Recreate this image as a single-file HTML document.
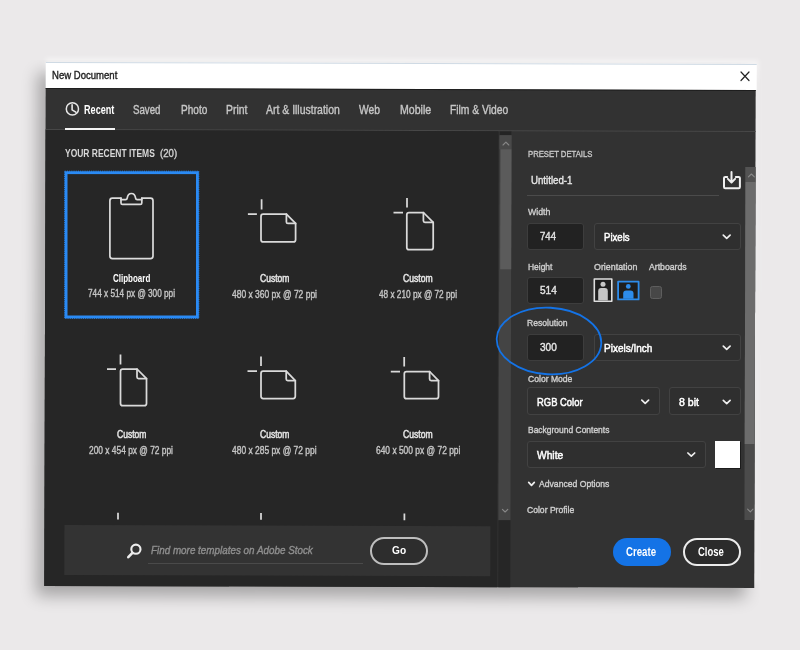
<!DOCTYPE html>
<html lang="en"><head><meta charset="utf-8"><title>New Document</title>
<style>
*{margin:0;padding:0;box-sizing:border-box}
html,body{width:800px;height:650px;overflow:hidden}
body{background:#ebe9ea;font-family:"Liberation Sans",sans-serif;position:relative}
.abs,.t,svg{position:absolute}
.t{white-space:nowrap;line-height:1;transform-origin:0 50%;display:block;-webkit-text-stroke:.38px currentColor}
#rot{left:0;top:0;width:800px;height:650px;transform:rotate(.165deg);transform-origin:400px 325px}
#glow{left:46px;top:64px;width:709px;height:520px;box-shadow:1px -3px 5px 2px rgba(255,255,255,.5)}
#shadow{left:45.5px;top:64px;width:709px;height:522.5px;box-shadow:-9px 10px 16px rgba(0,0,0,.29);clip-path:inset(-3px -6px -60px -60px)}
#titlebar{left:44.85px;top:63.3px;width:711.3px;height:25.6px;background:#fff;border-top:1px solid #cfdae4}
#tbline{left:44.85px;top:88.9px;width:710.35px;height:1.5px;background:#1d1d1d}
#win{left:44.85px;top:88.9px;width:710.35px;height:498.1px;background:#323232}
#tabline{left:44.85px;top:129.6px;width:710.35px;height:1px;background:#474747}
#tabul{left:65.3px;top:127.6px;width:49.6px;height:2.8px;background:#f4f4f4}
#left{left:44.85px;top:130.6px;width:453.65px;height:456.4px;background:#262626}
#lscroll{left:498.5px;top:131px;width:12.5px;height:389px;background:#444}
#lscroll .cap{left:0;top:0;width:12.5px;height:3.6px;background:#242424}
#lscroll .arr{left:0;top:3.6px;width:12.5px;height:14.6px;background:#494949}
#lscroll .thumb{left:1px;top:18.2px;width:11px;height:119.8px;background:#5b5b5b}
#lscrollbelow{left:498.5px;top:520px;width:12.5px;height:67px;background:#262626}
#search{left:64.8px;top:525.7px;width:426.2px;height:50px;background:#333}
#sul{left:148px;top:563px;width:215px;height:1px;background:#4a4a4a}
.pill{border-radius:15px}
#go{left:370px;top:537.2px;width:58px;height:28px;border:2px solid #bebebe;background:#2d2d2d}
#create{left:613px;top:537.5px;width:58px;height:28px;background:#1473e6}
#close{left:682.7px;top:537.5px;width:58px;height:28px;border:2px solid #ececec;background:#2b2b2b}
.inp{background:#222;border:1px solid #3d3d3d;border-radius:3px;width:57px;height:27.4px;left:527px}
.dd{background:#2f2f2f;border:1px solid #424242;border-radius:3px;height:27.4px}
#nameul{left:527px;top:195px;width:192px;height:1px;background:#4b4b4b}
#rscroll{left:744.6px;top:166px;width:10.8px;height:353px;background:#4b4b4b}
#rscroll .arr{left:0;top:0;width:10.8px;height:14.8px;background:#535353}
#rscroll .thumb{left:0;top:14.8px;width:10.8px;height:261.8px;background:#6c6c6c}
#swatch{left:715px;top:440.6px;width:25px;height:27px;background:#fff;box-shadow:1px 1px 0 #1c1c1c}
#chk{left:649.6px;top:285.6px;width:12.6px;height:13.4px;background:#474747;border:1.3px solid #5e5e5e;border-radius:2.5px}
#txt{left:0;top:0;width:800px;height:650px;will-change:transform}

</style></head><body>
<div class="abs" id="rot">
<div class="abs" id="glow"></div>
<div class="abs" id="shadow"></div>
<div class="abs" id="win"></div>
<div class="abs" id="titlebar"></div>
<div class="abs" id="tbline"></div>
<div class="abs" id="tabline"></div>
<div class="abs" id="left"></div>
<div class="abs" id="lscroll"><div class="abs cap"></div><div class="abs arr"></div><div class="abs thumb"></div></div>
<div class="abs" id="lscrollbelow"></div>
<div class="abs" id="search"></div>
<div class="abs" id="rscroll"><div class="abs arr"></div><div class="abs thumb"></div></div>
</div>
<div class="abs" id="tabul"></div>
<div class="abs" id="sul"></div>
<div class="abs pill" id="go"></div>
<div class="abs pill" id="create"></div>
<div class="abs pill" id="close"></div>
<div class="abs" id="nameul"></div>
<div class="abs inp" style="top:222.6px"></div>
<div class="abs inp" style="top:276.6px"></div>
<div class="abs inp" style="top:333.8px"></div>
<div class="abs dd" style="left:594px;top:222.6px;width:147px"></div>
<div class="abs dd" style="left:594px;top:333.8px;width:147px"></div>
<div class="abs dd" style="left:527px;top:387.4px;width:133px"></div>
<div class="abs dd" style="left:669px;top:387.4px;width:72px"></div>
<div class="abs dd" style="left:527px;top:440.5px;width:179px"></div>
<div class="abs" id="swatch"></div>
<div class="abs" id="chk"></div>
<svg id="ov" width="800" height="650" viewBox="0 0 800 650" style="left:0;top:0" fill="none" stroke-linecap="round" stroke-linejoin="round">
<!-- close X -->
<path d="M741 72 L749 80.5 M749 72 L741 80.5" stroke="#222" stroke-width="1.2"/>
<!-- clock icon -->
<circle cx="72.4" cy="108.9" r="6.1" stroke="#e8e8e8" stroke-width="1.5"/>
<path d="M72.1 104.8 V109.8 L75.8 112.2" stroke="#e8e8e8" stroke-width="1.6"/>
<!-- selection box -->
<rect x="66.1" y="172.7" width="131.3" height="144.2" stroke="#2a8af4" stroke-width="2.8" stroke-linejoin="miter"/>
<rect x="64.7" y="171.2" width="134.1" height="147.1" stroke="#2a8af4" stroke-width="1" stroke-dasharray="1.1 1.1" stroke-linecap="butt" stroke-linejoin="miter"/>
<!-- clipboard icon -->
<g stroke="#dcdcdc" stroke-width="1.7">
<path d="M121 198.2 H112.4 Q109.9 198.2 109.9 200.7 V256.1 Q109.9 258.6 112.4 258.6 H150.5 Q153 258.6 153 256.1 V200.7 Q153 198.2 150.5 198.2 H141.8"/>
<path d="M121 198.2 V202.9 Q121 204.4 122.5 204.4 H140.3 Q141.8 204.4 141.8 202.9 V198.2"/>
<path d="M121 199.7 H125.6 Q127 199.7 127.2 198.2 Q127.9 193.5 131.4 193.5 Q134.9 193.5 135.6 198.2 Q135.8 199.7 137.2 199.7 H141.8"/>
</g>
<!-- doc icons -->
<g stroke="#dadada" stroke-width="1.75">
<path d="M286.4 214.2 H263.2 Q261 214.2 261 216.4 V239.7 Q261 241.9 263.2 241.9 H293.4 Q295.6 241.9 295.6 239.7 V223.4 Z"/>
<path d="M286.4 214.2 V221.9 Q286.4 223.4 287.9 223.4 H295.6"/>
<path stroke-linecap="butt" d="M261.6 199.2 V209.4 M247.9 214.2 H256.9"/>
<path d="M423.4 212.5 H409.0 Q406.8 212.5 406.8 214.7 V247.5 Q406.8 249.7 409.0 249.7 H431.0 Q433.2 249.7 433.2 247.5 V222.3 Z"/>
<path d="M423.4 212.5 V220.8 Q423.4 222.3 424.9 222.3 H433.2"/>
<path stroke-linecap="butt" d="M407 198 V207.5 M393.5 212.5 H403"/>
<path d="M137 369 H122.7 Q120.5 369 120.5 371.2 V403.5 Q120.5 405.7 122.7 405.7 H144.3 Q146.5 405.7 146.5 403.5 V378.6 Z"/>
<path d="M137 369 V377.1 Q137 378.6 138.5 378.6 H146.5"/>
<path stroke-linecap="butt" d="M120.5 354.5 V364.5 M107 369 H116"/>
<path d="M286.2 371.2 H263.2 Q261 371.2 261 373.4 V396.3 Q261 398.5 263.2 398.5 H293.1 Q295.3 398.5 295.3 396.3 V380.6 Z"/>
<path d="M286.2 371.2 V379.1 Q286.2 380.6 287.7 380.6 H295.3"/>
<path stroke-linecap="butt" d="M261 356.5 V366 M247.5 371.2 H257"/>
<path d="M429.6 371.5 H406.5 Q404.3 371.5 404.3 373.7 V396.5 Q404.3 398.7 406.5 398.7 H436.3 Q438.5 398.7 438.5 396.5 V380.6 Z"/>
<path d="M429.6 371.5 V379.1 Q429.6 380.6 431.1 380.6 H438.5"/>
<path stroke-linecap="butt" d="M404.2 357 V366.5 M390.8 371.5 H400"/>
<path stroke-linecap="butt" d="M118 512.7 V519.5 M261 513 V519.8 M404.4 513.4 V520.2"/>
</g>
<!-- search icon -->
<circle cx="135.9" cy="549.2" r="4.6" stroke="#ececec" stroke-width="2.1"/>
<path d="M132.4 552.8 L128.3 557.2" stroke="#ececec" stroke-width="2.6"/>
<!-- scroll arrows -->
<g stroke="#888888" stroke-width="1.1">
<path d="M503 145 L505.9 142.2 L508.8 145"/>
<path d="M502.4 509.3 L505.1 512 L507.8 509.3"/>
<path d="M748.4 176.9 L751.4 174 L754.4 176.9"/>
<path d="M747.6 509.2 L750.3 511.9 L753 509.2"/>
</g>
<!-- save icon -->
<g stroke="#f0f0f0" stroke-width="2">
<path d="M727.2 176.9 H725.2 Q724 176.9 724 178.1 V187 Q724 188.2 725.2 188.2 H738.7 Q739.9 188.2 739.9 187 V178.1 Q739.9 176.9 738.7 176.9 H735.8"/>
<path d="M731.5 172 V181.8 M727.9 178.9 L731.5 182.5 L735.1 178.9"/>
</g>
<!-- dropdown chevrons -->
<g stroke="#efefef" stroke-width="1.7">
<path d="M723.3 235.2 L726.7 238.4 L730.1 235.2"/>
<path d="M723.3 346.2 L726.7 349.4 L730.1 346.2"/>
<path d="M641.8 400.2 L645.2 403.4 L648.6 400.2"/>
<path d="M723.3 400.4 L726.7 403.6 L730.1 400.4"/>
<path d="M687.9 453.0 L691.3 456.2 L694.7 453.0"/>
<path d="M528.7 482.3 L531.5 485.3 L534.3 482.3"/>
</g>
<!-- orientation icons -->
<rect x="594.3" y="279" width="17.5" height="22.3" fill="#1e1e1e" stroke="#dedede" stroke-width="1.6"/>
<circle cx="603" cy="284.2" r="2.5" fill="#c6c6c6"/>
<path d="M598.2 300.6 V291.2 Q598.2 288.1 601.2 288.1 H604.8 Q607.8 288.1 607.8 291.2 V300.6 Z" fill="#c6c6c6"/>
<rect x="618.1" y="281.7" width="20.5" height="17.7" fill="#1e1e1e" stroke="#2d8ceb" stroke-width="1.8"/>
<circle cx="628.3" cy="286.4" r="2.4" fill="#2d8ceb"/>
<path d="M623.2 298.8 V293.6 Q623.2 290.6 626.2 290.6 H630.5 Q633.5 290.6 633.5 293.6 V298.8 Z" fill="#2d8ceb"/>
<!-- annotation ellipse -->
<ellipse cx="549" cy="341" rx="52.3" ry="33.3" stroke="#1473e6" stroke-width="1.8" transform="rotate(3 549 341)"/>
</svg>

<div class="abs" id="txt">
<span class="t" id="t0" style="left:51.5px;top:69.57px;font-size:11.5px;font-weight:400;color:#1c1c1c;transform:scaleX(0.8305);">New Document</span>
<span class="t" id="t1" style="left:84.0px;top:104.42px;font-size:12.5px;font-weight:700;color:#ffffff;transform:scaleX(0.7292);-webkit-text-stroke:0;">Recent</span>
<span class="t" id="t2" style="left:133.3px;top:103.84px;font-size:12px;font-weight:400;color:#c6c6c6;transform:scaleX(0.8081);">Saved</span>
<span class="t" id="t3" style="left:180.5px;top:103.84px;font-size:12px;font-weight:400;color:#c6c6c6;transform:scaleX(0.8387);">Photo</span>
<span class="t" id="t4" style="left:225.5px;top:103.84px;font-size:12px;font-weight:400;color:#c6c6c6;transform:scaleX(0.8668);">Print</span>
<span class="t" id="t5" style="left:266.4px;top:103.84px;font-size:12px;font-weight:400;color:#c6c6c6;transform:scaleX(0.8713);">Art &amp; Illustration</span>
<span class="t" id="t6" style="left:359.4px;top:103.84px;font-size:12px;font-weight:400;color:#c6c6c6;transform:scaleX(0.8582);">Web</span>
<span class="t" id="t7" style="left:399.5px;top:103.84px;font-size:12px;font-weight:400;color:#c6c6c6;transform:scaleX(0.8795);">Mobile</span>
<span class="t" id="t8" style="left:450.0px;top:103.84px;font-size:12px;font-weight:400;color:#c6c6c6;transform:scaleX(0.8582);">Film &amp; Video</span>
<span class="t" id="t9" style="left:65.0px;top:148.53px;font-size:10px;font-weight:700;color:#d8d8d8;transform:scaleX(0.8462);-webkit-text-stroke:0;">YOUR RECENT ITEMS</span>
<span class="t" id="t10" style="left:159.7px;top:148.53px;font-size:10px;font-weight:400;color:#d0d0d0;transform:scaleX(0.9608);">(20)</span>
<span class="t" id="t11" style="left:112.7px;top:274.14px;font-size:10px;font-weight:700;color:#ffffff;transform:scaleX(0.7992);-webkit-text-stroke:0;">Clipboard</span>
<span class="t" id="t12" style="left:88.0px;top:288.94px;font-size:10px;font-weight:400;color:#c4c4c4;transform:scaleX(0.8225);">744 x 514 px @ 300 ppi</span>
<span class="t" id="t13" style="left:260.0px;top:274.14px;font-size:10px;font-weight:400;color:#e4e4e4;transform:scaleX(0.8533);-webkit-text-stroke:.5px currentColor;">Custom</span>
<span class="t" id="t14" style="left:232.0px;top:290.14px;font-size:10px;font-weight:400;color:#c4c4c4;transform:scaleX(0.8480);">480 x 360 px @ 72 ppi</span>
<span class="t" id="t15" style="left:403.4px;top:274.14px;font-size:10px;font-weight:400;color:#e4e4e4;transform:scaleX(0.8591);-webkit-text-stroke:.5px currentColor;">Custom</span>
<span class="t" id="t16" style="left:379.0px;top:290.14px;font-size:10px;font-weight:400;color:#c4c4c4;transform:scaleX(0.8239);">48 x 210 px @ 72 ppi</span>
<span class="t" id="t17" style="left:116.6px;top:429.84px;font-size:10px;font-weight:400;color:#e4e4e4;transform:scaleX(0.8533);-webkit-text-stroke:.5px currentColor;">Custom</span>
<span class="t" id="t18" style="left:89.0px;top:445.54px;font-size:10px;font-weight:400;color:#c4c4c4;transform:scaleX(0.8380);">200 x 454 px @ 72 ppi</span>
<span class="t" id="t19" style="left:260.0px;top:429.84px;font-size:10px;font-weight:400;color:#e4e4e4;transform:scaleX(0.8533);-webkit-text-stroke:.5px currentColor;">Custom</span>
<span class="t" id="t20" style="left:232.0px;top:445.54px;font-size:10px;font-weight:400;color:#c4c4c4;transform:scaleX(0.8440);">480 x 285 px @ 72 ppi</span>
<span class="t" id="t21" style="left:403.4px;top:429.84px;font-size:10px;font-weight:400;color:#e4e4e4;transform:scaleX(0.8591);-webkit-text-stroke:.5px currentColor;">Custom</span>
<span class="t" id="t22" style="left:375.6px;top:445.54px;font-size:10px;font-weight:400;color:#c4c4c4;transform:scaleX(0.8420);">640 x 500 px @ 72 ppi</span>
<span class="t" id="t23" style="left:151.0px;top:545.19px;font-size:11px;font-weight:400;color:#8f8f8f;transform:scaleX(0.8960);font-style:italic;">Find more templates on Adobe Stock</span>
<span class="t" id="t24" style="left:391.9px;top:544.57px;font-size:11.5px;font-weight:700;color:#ffffff;transform:scaleX(0.8821);-webkit-text-stroke:0;">Go</span>
<span class="t" id="t25" style="left:527.6px;top:148.96px;font-size:9.5px;font-weight:400;color:#c6c6c6;transform:scaleX(0.8113);">PRESET DETAILS</span>
<span class="t" id="t26" style="left:530.6px;top:175.09px;font-size:11px;font-weight:400;color:#e8e8e8;transform:scaleX(0.8794);">Untitled-1</span>
<span class="t" id="t27" style="left:527.6px;top:207.36px;font-size:9.5px;font-weight:400;color:#cfcfcf;transform:scaleX(0.9219);">Width</span>
<span class="t" id="t28" style="left:540.0px;top:231.31px;font-size:10.5px;font-weight:400;color:#e6e6e6;transform:scaleX(0.9127);">744</span>
<span class="t" id="t29" style="left:604.0px;top:231.67px;font-size:11.5px;font-weight:400;color:#ffffff;transform:scaleX(0.8342);-webkit-text-stroke:.5px currentColor;">Pixels</span>
<span class="t" id="t30" style="left:527.6px;top:262.36px;font-size:9.5px;font-weight:400;color:#cfcfcf;transform:scaleX(0.8883);">Height</span>
<span class="t" id="t31" style="left:593.6px;top:262.36px;font-size:9.5px;font-weight:400;color:#cfcfcf;transform:scaleX(0.9336);">Orientation</span>
<span class="t" id="t32" style="left:649.3px;top:262.36px;font-size:9.5px;font-weight:400;color:#cfcfcf;transform:scaleX(0.9153);">Artboards</span>
<span class="t" id="t33" style="left:539.6px;top:285.31px;font-size:10.5px;font-weight:400;color:#e6e6e6;transform:scaleX(0.9583);">514</span>
<span class="t" id="t34" style="left:527.4px;top:318.36px;font-size:9.5px;font-weight:400;color:#cfcfcf;transform:scaleX(0.9044);">Resolution</span>
<span class="t" id="t35" style="left:539.6px;top:342.31px;font-size:10.5px;font-weight:400;color:#e6e6e6;transform:scaleX(0.9583);">300</span>
<span class="t" id="t36" style="left:604.0px;top:343.27px;font-size:11.5px;font-weight:400;color:#ffffff;transform:scaleX(0.8704);-webkit-text-stroke:.5px currentColor;">Pixels/Inch</span>
<span class="t" id="t37" style="left:527.6px;top:373.56px;font-size:9.5px;font-weight:400;color:#cfcfcf;transform:scaleX(0.9041);">Color Mode</span>
<span class="t" id="t38" style="left:537.4px;top:397.27px;font-size:11.5px;font-weight:400;color:#ffffff;transform:scaleX(0.8200);-webkit-text-stroke:.5px currentColor;">RGB Color</span>
<span class="t" id="t39" style="left:679.4px;top:397.27px;font-size:11.5px;font-weight:400;color:#ffffff;transform:scaleX(0.9195);-webkit-text-stroke:.5px currentColor;">8 bit</span>
<span class="t" id="t40" style="left:527.6px;top:424.96px;font-size:9.5px;font-weight:400;color:#cfcfcf;transform:scaleX(0.8908);">Background Contents</span>
<span class="t" id="t41" style="left:537.4px;top:450.27px;font-size:11.5px;font-weight:400;color:#ffffff;transform:scaleX(0.8910);-webkit-text-stroke:.5px currentColor;">White</span>
<span class="t" id="t42" style="left:538.6px;top:478.96px;font-size:9.5px;font-weight:400;color:#cfcfcf;transform:scaleX(0.9067);">Advanced Options</span>
<span class="t" id="t43" style="left:526.8px;top:505.26px;font-size:9.5px;font-weight:400;color:#cfcfcf;transform:scaleX(0.9028);">Color Profile</span>
<span class="t" id="t44" style="left:626.3px;top:546.34px;font-size:12px;font-weight:700;color:#ffffff;transform:scaleX(0.8030);-webkit-text-stroke:0;">Create</span>
<span class="t" id="t45" style="left:698.0px;top:546.34px;font-size:12px;font-weight:700;color:#ffffff;transform:scaleX(0.7893);-webkit-text-stroke:0;">Close</span>
</div>
</body></html>
